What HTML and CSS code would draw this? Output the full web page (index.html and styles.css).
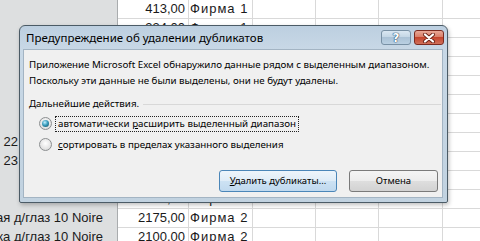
FILE: index.html
```html
<!DOCTYPE html>
<html lang="ru">
  <head>
    <meta charset="UTF-8" />
    <meta name="viewport" content="width=device-width, initial-scale=1.0" />
    <title>Удаление дубликатов</title>
    <link rel="stylesheet" href="styles.css">
  </head>
  <body>
    <div class="sheet">
      <div class="row">
        <div class="cell name"></div>
        <div class="cell num">413,00</div>
        <div class="cell firm">Фирма 1</div>
        <div class="cell"></div><div class="cell"></div><div class="cell"></div><div class="cell last"></div>
      </div>
      <div class="row">
        <div class="cell name"></div>
        <div class="cell num">334,00</div>
        <div class="cell firm">Фирма 1</div>
        <div class="cell"></div><div class="cell"></div><div class="cell"></div><div class="cell last"></div>
      </div>
      <div class="row">
        <div class="cell name"></div>
        <div class="cell num">1250,00</div>
        <div class="cell firm">Фирма 1</div>
        <div class="cell"></div><div class="cell"></div><div class="cell"></div><div class="cell last"></div>
      </div>
      <div class="row">
        <div class="cell name"></div>
        <div class="cell num">980,00</div>
        <div class="cell firm">Фирма 2</div>
        <div class="cell"></div><div class="cell"></div><div class="cell"></div><div class="cell last"></div>
      </div>
      <div class="row">
        <div class="cell name"></div>
        <div class="cell num">760,00</div>
        <div class="cell firm">Фирма 2</div>
        <div class="cell"></div><div class="cell"></div><div class="cell"></div><div class="cell last"></div>
      </div>
      <div class="row">
        <div class="cell name"></div>
        <div class="cell num">1540,00</div>
        <div class="cell firm">Фирма 1</div>
        <div class="cell"></div><div class="cell"></div><div class="cell"></div><div class="cell last"></div>
      </div>
      <div class="row">
        <div class="cell name"></div>
        <div class="cell num">615,00</div>
        <div class="cell firm">Фирма 1</div>
        <div class="cell"></div><div class="cell"></div><div class="cell"></div><div class="cell last"></div>
      </div>
      <div class="row">
        <div class="cell name short"><span>Карандаш для глаз Линия 22</span></div>
        <div class="cell num">540,00</div>
        <div class="cell firm">Фирма 2</div>
        <div class="cell"></div><div class="cell"></div><div class="cell"></div><div class="cell last"></div>
      </div>
      <div class="row">
        <div class="cell name short"><span>Карандаш для глаз Линия 23</span></div>
        <div class="cell num">540,00</div>
        <div class="cell firm">Фирма 2</div>
        <div class="cell"></div><div class="cell"></div><div class="cell"></div><div class="cell last"></div>
      </div>
      <div class="row">
        <div class="cell name"></div>
        <div class="cell num">1890,00</div>
        <div class="cell firm">Фирма 2</div>
        <div class="cell"></div><div class="cell"></div><div class="cell"></div><div class="cell last"></div>
      </div>
      <div class="row">
        <div class="cell name"></div>
        <div class="cell num">1920,00</div>
        <div class="cell firm">Фирма 2</div>
        <div class="cell"></div><div class="cell"></div><div class="cell"></div><div class="cell last"></div>
      </div>
      <div class="row">
        <div class="cell name long"><span>Подводка жидкая д/глаз 10 Noire</span></div>
        <div class="cell num">2175,00</div>
        <div class="cell firm">Фирма 2</div>
        <div class="cell"></div><div class="cell"></div><div class="cell"></div><div class="cell last"></div>
      </div>
      <div class="row">
        <div class="cell name long"><span>Подводка д/глаз 10 Noire</span></div>
        <div class="cell num">2100,00</div>
        <div class="cell firm">Фирма 2</div>
        <div class="cell"></div><div class="cell"></div><div class="cell"></div><div class="cell last"></div>
      </div>
    </div>

    <div class="dialog">
      <div class="titlebar">
        <div class="title">Предупреждение об удалении дубликатов</div>
        <div class="caption-buttons">
          <div class="cap help">?</div>
          <div class="cap close">
            <svg width="14" height="10" viewBox="0 0 14 10">
              <path d="M3 1.5 L11 8.5 M11 1.5 L3 8.5" stroke="#6b2418" stroke-width="4" stroke-linecap="round" />
              <path d="M3 1.5 L11 8.5 M11 1.5 L3 8.5" stroke="#ffffff" stroke-width="2.2" stroke-linecap="round" />
            </svg>
          </div>
        </div>
      </div>

      <div class="client">
        <p class="message">Приложение Microsoft Excel обнаружило данные рядом с выделенным диапазоном.</p>
        <p class="message">Поскольку эти данные не были выделены, они не будут удалены.</p>

        <div class="group">Дальнейшие действия.</div>

        <div class="options">
          <div class="option">
            <span class="radio on"></span>
            <span class="label focus">автоматически <u>р</u>асширить выделенный диапазон</span>
          </div>
          <div class="option">
            <span class="radio"></span>
            <span class="label"><u>с</u>ортировать в пределах указанного выделения</span>
          </div>
        </div>

        <div class="actions">
          <button class="btn delete"><u>У</u>далить дубликаты...</button>
          <button class="btn cancel">Отмена</button>
        </div>
      </div>
    </div>
  </body>
</html>
```

FILE: styles.css
```css
* {
  box-sizing: border-box;
}
body {
  margin: 0;
  width: 480px;
  height: 241px;
  overflow: hidden;
  position: relative;
  background-color: #fff;
  font-family: "Liberation Sans Narrow", "Liberation Sans", Arial, sans-serif;
  font-size: 13px;
  color: #1a1a1a;
}
.sheet {
  margin-top: -1px;
}
.row {
  display: grid;
  grid-template-columns: 118px 71px 64px 63px 63px 64px 1fr;
  height: 19px;
}
.cell {
  border-right: 1px solid #d9d9d9;
  border-bottom: 1px solid #d9d9d9;
  line-height: 19px;
  white-space: nowrap;
}
.cell.last {
  border-right: none;
}
.name {
  display: flex;
  justify-content: flex-end;
  background-color: #dddfe0;
  border-right-color: #a9acae;
  border-bottom-color: #c9cbcd;
}
.name.short {
  padding-right: 99px;
}
.name.long {
  padding-right: 14px;
}
.num {
  text-align: right;
  padding-right: 3px;
}
.firm {
  padding-left: 1px;
  letter-spacing: 1px;
}

/* dialog */
.dialog {
  position: absolute;
  left: 19px;
  top: 25px;
  width: 429px;
  height: 178px;
  display: flex;
  flex-direction: column;
  padding: 0 4px 4px 3px;
  border: 1px solid #4b5b66;
  border-radius: 6px 6px 2px 2px;
  background: linear-gradient(#bccfe0, #c8d8e6 24px, #c1d2e0);
  box-shadow: 1px 2px 4px rgba(0, 0, 0, 0.25);
  font-family: "Noto Sans", "Open Sans", sans-serif;
  color: #000;
}
.titlebar {
  height: 23px;
  display: flex;
  align-items: flex-start;
}
.title {
  font-size: 11.5px;
  line-height: 23px;
  padding-left: 3px;
  white-space: nowrap;
}
.caption-buttons {
  display: flex;
  gap: 3px;
  margin: 4px -1px 0 auto;
}
.cap {
  width: 30px;
  height: 15px;
  border-radius: 3px;
  display: flex;
  align-items: center;
  justify-content: center;
}
.help {
  border: 1px solid #7890a4;
  background: linear-gradient(#dae7f2, #c2d5e4 50%, #abc2d6 50%, #bad0e2);
  color: #fff;
  font: bold 12px "DejaVu Sans", sans-serif;
  text-shadow: 0 0 1px #26496a, 0 0 1px #26496a, 0 0 1px #26496a;
}
.close {
  border: 1px solid #7c2b20;
  background: linear-gradient(#e9a897, #d77a64 50%, #c4452d 50%, #d0705a);
}
.client {
  flex: 1;
  display: flex;
  flex-direction: column;
  padding: 7px 4px 5px 5px;
  border: 1px solid #a3b4c3;
  background-color: #f0f0f0;
  font-size: 9.75px;
  line-height: 16px;
}
.message {
  margin: 0;
  white-space: nowrap;
}
.group {
  display: flex;
  align-items: center;
  gap: 4px;
  margin-top: 7px;
}
.group::after {
  content: "";
  flex: 1;
  border-top: 1px solid #d8d8d8;
  margin-right: -3px;
}
.options {
  margin: 1px 0 0 10px;
}
.option {
  display: flex;
  align-items: center;
  height: 21px;
}
.radio {
  width: 13px;
  height: 13px;
  margin-right: 3px;
  border-radius: 50%;
  border: 1px solid #8c8f91;
  background: radial-gradient(circle at 50% 40%, #fff, #e0e0e0 70%, #cfcfcf);
  display: flex;
  align-items: center;
  justify-content: center;
}
.radio.on::after {
  content: "";
  width: 7px;
  height: 7px;
  border-radius: 50%;
  background: radial-gradient(circle at 40% 35%, #c4f0ff, #3a9dbd 45%, #0e4558);
}
.label {
  padding: 0 2px;
  line-height: 14px;
  border: 1px dotted transparent;
}
.label.focus {
  border-color: #222;
}
.actions {
  margin-top: auto;
  display: flex;
  justify-content: flex-end;
  gap: 12px;
}
.btn {
  height: 22px;
  padding: 0;
  border: 1px solid #7a7a7a;
  border-radius: 3px;
  background: linear-gradient(#f4f4f4, #ececec 50%, #dedede 50%, #d2d2d2);
  font: inherit;
  font-size: 9.5px;
  color: #000;
}
.btn.delete {
  width: 118px;
  border-color: #4b86b8;
  background: linear-gradient(#eef5fb, #dfecf7 50%, #cde2f3 50%, #c0d9ee);
}
.btn.cancel {
  width: 89px;
}
```
